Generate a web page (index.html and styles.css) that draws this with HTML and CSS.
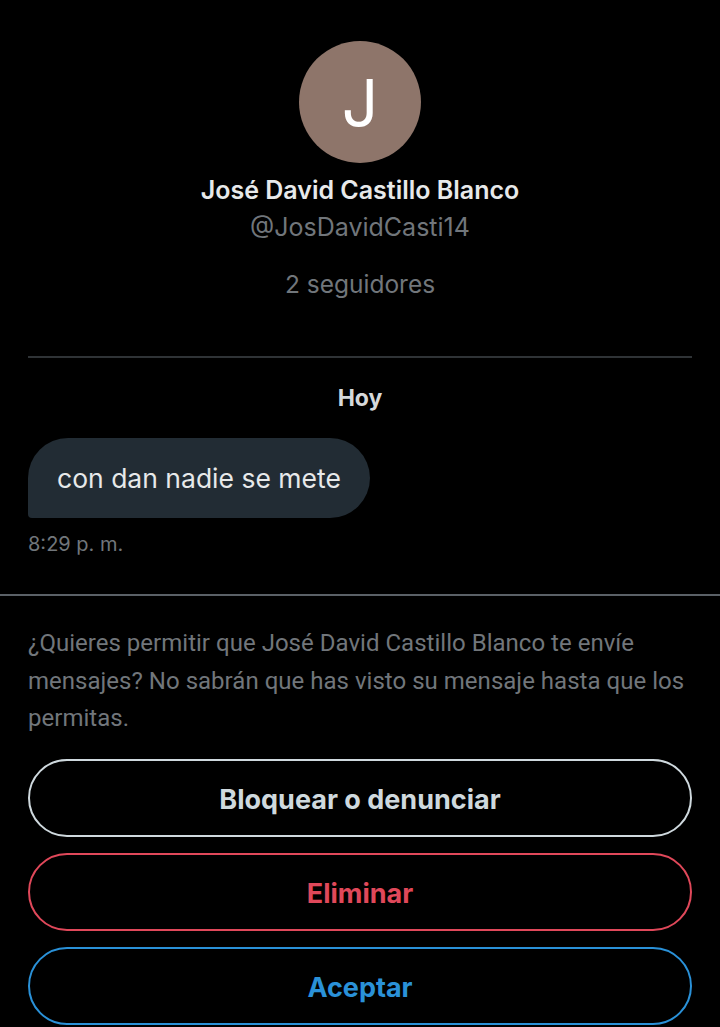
FILE: index.html
```html
<!DOCTYPE html>
<html lang="es">
<head>
  <meta name="viewport" content="width=device-width, initial-scale=1.0" />
  <title>Solicitud de mensaje</title>
  <link rel="stylesheet" href="styles.css">
</head>
<body>

  <div class="profile">
    <div class="avatar">J</div>
    <div class="name">José David Castillo Blanco</div>
    <div class="handle">@JosDavidCasti14</div>
    <div class="followers">2 seguidores</div>
  </div>

  <div class="chat">
    <div class="day">Hoy</div>
    <div class="bubble">con dan nadie se mete</div>
    <div class="time">8:29 p. m.</div>
  </div>

  <div class="request">
    <p class="request-text">¿Quieres permitir que José David Castillo Blanco te envíe mensajes? No sabrán que has visto su mensaje hasta que los permitas.</p>

    <div class="actions">
      <button class="btn btn-block">Bloquear o denunciar</button>
      <button class="btn btn-delete">Eliminar</button>
      <button class="btn btn-accept">Aceptar</button>
    </div>
  </div>

</body>
</html>
```

FILE: styles.css
```css
body {
  margin: 0;
  background: #000;
  font-family: Inter, Roboto, sans-serif;
  color: #e7e9ea;
}

.profile {
  display: flex;
  flex-direction: column;
  align-items: center;
  padding-top: 41px;
  margin: 0 28px;
  padding-bottom: 57px;
  border-bottom: 2px solid #2f3336;
}

.avatar {
  width: 122px;
  height: 122px;
  border-radius: 50%;
  background: #8e756a;
  color: #fff;
  font-size: 64px;
  display: flex;
  align-items: center;
  justify-content: center;
}

.name {
  font-size: 25px;
  font-weight: 600;
  margin-top: 12px;
  line-height: 30px;
}

.handle {
  font-size: 25px;
  color: #71767b;
  line-height: 30px;
  margin-top: 7px;
}

.followers {
  font-size: 24.5px;
  color: #71767b;
  line-height: 30px;
  margin-top: 27px;
}

.chat {
  padding: 26px 28px 38px;
  border-bottom: 2px solid #5b6167;
}

.day {
  text-align: center;
  font-size: 23px;
  font-weight: bold;
  color: #d6d9db;
  line-height: 28px;
}

.bubble {
  display: inline-block;
  margin-top: 26px;
  background: #222c34;
  color: #e7e9ea;
  font-size: 26.5px;
  line-height: 80px;
  padding: 0 29px;
  border-radius: 40px 40px 40px 4px;
}

.time {
  font-size: 20px;
  color: #71767b;
  margin-top: 14px;
  line-height: 24px;
}

.request {
  padding: 29px 28px 0;
}

.request-text {
  margin: 0;
  font-family: Roboto, sans-serif;
  font-size: 24px;
  letter-spacing: 0.02px;
  line-height: 37.5px;
  color: #71767b;
}

.actions {
  display: flex;
  flex-direction: column;
  gap: 16px;
  margin-top: 21px;
}

.btn {
  height: 78px;
  padding-top: 5px;
  border-radius: 39px;
  background: transparent;
  border: 2px solid;
  font-family: Inter, Roboto, sans-serif;
  font-size: 27px;
  font-weight: bold;
  cursor: pointer;
}

.btn-block {
  border-color: #cfd9de;
  color: #cfd9de;
}

.btn-delete {
  border-color: #e0485a;
  color: #e0485a;
}

.btn-accept {
  border-color: #2a91d8;
  color: #2a91d8;
}
```
